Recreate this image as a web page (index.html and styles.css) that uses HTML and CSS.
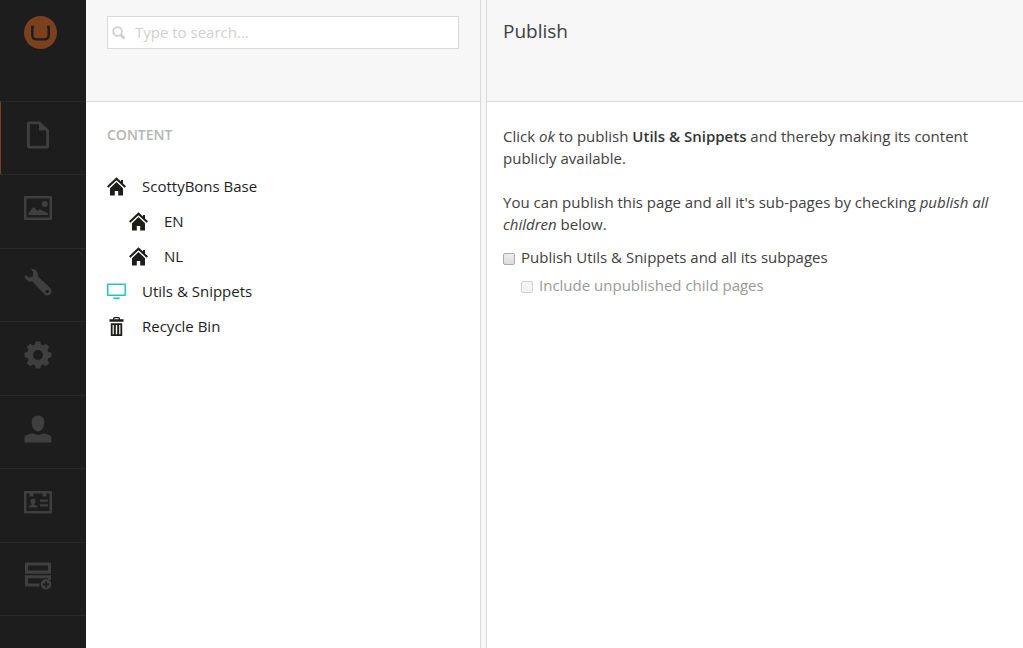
FILE: index.html
```html
<!DOCTYPE html>
<html lang="en">
<head>
<meta charset="utf-8">
<title>Publish</title>
<meta name="viewport" content="width=device-width, initial-scale=1">
<link rel="stylesheet" href="styles.css">
</head>
<body>
<svg class="sprite" aria-hidden="true">
  <symbol id="home" viewBox="0 0 19 19">
    <path d="M9.500 .3 0 9.300l1.400 1.500 8.100-7.600 8.100 7.600L19 9.300l-3-2.900V3h-2v1.500z"/>
    <path d="M9.500 5 3 11.200V18.500h4.800V14h3.400v4.500H16v-7.300z"/>
  </symbol>
</svg>
<div class="app">
  <nav class="sections" aria-label="Sections">
    <a class="logo" href="#" aria-label="Home">
      <svg viewBox="0 0 33 33" width="33" height="33"><circle cx="16.500" cy="16.500" r="16.500" fill="#7b411e"/><path d="M10 11H8.300V19Q8.300 23.400 12.800 23.400H20.200Q24.700 23.400 24.700 19V11H23" fill="none" stroke="#1d1d1d" stroke-width="2.400"/></svg>
    </a>
    <div class="section-list">
      <a class="section active" href="#" aria-label="Content"><svg class="icon" viewBox="0 0 30 30"><path fill-rule="evenodd" d="M6 1.500h11L26 10v16.500a2 2 0 0 1-2 2H6a2 2 0 0 1-2-2v-23a2 2 0 0 1 2-2zM6.800 4.300v21.400h16.400V10.500H16V4.300z"/></svg></a>
      <a class="section" href="#" aria-label="Media"><svg class="icon" viewBox="0 0 30 30"><path fill-rule="evenodd" d="M2 3h26a1 1 0 0 1 1 1v22a1 1 0 0 1-1 1H2a1 1 0 0 1-1-1V4a1 1 0 0 1 1-1zm1.500 2.500v19h23v-19z"/><circle cx="21.800" cy="11" r="3"/><path d="M5.500 22v-2l5-6 4.200 4 2-1.800 8.300 4V22z"/></svg></a>
      <a class="section" href="#" aria-label="Settings"><svg class="icon" viewBox="0 0 30 30"><path fill-rule="evenodd" d="M8 1.700c4.300-.5 7.600 3.300 6.900 7.500L27.400 21.300c3.600 4.200-1.900 9.600-6 6L9.500 14.500C5.500 15.500 1.300 12.300 1.700 8l4.500 2.500 3.800-1V5zM24.200 22.700a1.700 1.700 0 1 0 0 3.400 1.700 1.700 0 0 0 0-3.400z"/></svg></a>
      <a class="section" href="#" aria-label="Developer"><svg class="icon" viewBox="0 0 30 30"><path fill-rule="evenodd" d="M12.700 1.500h4.600l.7 3.100 2.200.9 2.700-1.700 3.300 3.300-1.700 2.700.9 2.200 3.100.7v4.600l-3.100.7-.9 2.200 1.700 2.700-3.300 3.300-2.700-1.700-2.200.9-.7 3.100h-4.600l-.7-3.100-2.200-.9-2.700 1.700-3.300-3.300 1.700-2.700-.9-2.200-3.100-.7v-4.600l3.100-.7.9-2.200-1.700-2.700 3.300-3.300 2.700 1.700 2.200-.9zM15 10a5 5 0 1 0 0 10 5 5 0 0 0 0-10z"/></svg></a>
      <a class="section" href="#" aria-label="Users"><svg class="icon" viewBox="0 0 30 30"><path d="M15 1.500c4.200 0 6.300 3 6.300 7 0 4.500-2.800 9-6.300 9s-6.300-4.500-6.300-9c0-4 2.100-7 6.300-7zM1.500 28.500v-4.700c0-2.500 5-4.300 9-4.300 3 1.700 6 1.700 9 0 4 0 9 1.800 9 4.300v4.700z"/></svg></a>
      <a class="section" href="#" aria-label="Members"><svg class="icon" viewBox="0 0 30 30"><path fill-rule="evenodd" d="M2 4h26a1 1 0 0 1 1 1v20.500a1 1 0 0 1-1 1H2a1 1 0 0 1-1-1V5a1 1 0 0 1 1-1zm1.500 2.500V24h23V6.500h-3v3h-4v-3h-9v3h-4v-3z"/><path d="M10 11.500c3.400 0 2.800 5 1 6.200 1.800.4 3.500.8 3.500 2.800h-9c0-2 1.700-2.400 3.500-2.800-1.800-1.200-2.400-6.200 1-6.200zM17 12.500h8v2.300h-8zM17 17.200h8v2.300h-8z"/></svg></a>
      <a class="section" href="#" aria-label="Forms"><svg class="icon" viewBox="0 0 30 30"><path fill-rule="evenodd" d="M2 1.500h26v11.300H2zM5 4.500v5h20v-5zM2 14.200h26v5h-3v-2H5v5.300h11.500v3H2z"/><path fill-rule="evenodd" d="M23 18a5.300 5.300 0 1 1 0 10.600A5.300 5.300 0 0 1 23 18zm-.8 2.300v2.200H20v1.700h2.200v2.200h1.700v-2.200H26v-1.700h-2.100v-2.200z"/></svg></a>
    </div>
  </nav>
  <aside class="tree-panel">
    <header class="bar tree-bar">
      <form class="search">
        <svg class="search-icon" viewBox="0 0 14 14" width="14" height="14"><circle cx="5.500" cy="5.500" r="4.400" fill="none" stroke="#d0d0d0" stroke-width="1.700"/><path d="m8.500 8.500 4 4" stroke="#d0d0d0" stroke-width="2.800"/></svg>
        <input class="search-box" type="text" placeholder="Type to search..." aria-label="Search">
      </form>
    </header>
    <div class="tree">
      <h2 class="tree-title">CONTENT</h2>
      <ul class="nodes">
        <li><a class="node" href="#"><svg class="node-icon"><use href="#home"/></svg>ScottyBons Base</a>
          <ul class="nodes nested">
            <li><a class="node" href="#"><svg class="node-icon"><use href="#home"/></svg>EN</a></li>
            <li><a class="node" href="#"><svg class="node-icon"><use href="#home"/></svg>NL</a></li>
          </ul>
        </li>
        <li><a class="node" href="#"><svg class="node-icon teal" viewBox="0 0 19 19"><path fill-rule="evenodd" d="M1 1.500h17a1 1 0 0 1 1 1V13a1 1 0 0 1-1 1H1a1 1 0 0 1-1-1V2.500a1 1 0 0 1 1-1zM1.500 3v9.500h16V3zM5.500 15.500h8L12 17.300H7z"/></svg>Utils &amp; Snippets</a></li>
        <li><a class="node" href="#"><svg class="node-icon" viewBox="0 0 19 19"><path fill-rule="evenodd" d="M6 2.300V1.500Q6 0 7.500 0h4Q13 0 13 1.500v.8h3.500v2.500h-14V2.300zm1.300 0h4.400V1.200H7.300zM3.800 6.200h11.400V19H3.800zM5.600 8v9.200h1.200V8zm3.200 0v9.200h1.400V8zm3.400 0v9.200h1.200V8z"/></svg>Recycle Bin</a></li>
      </ul>
    </div>
  </aside>
  <main class="dialog">
    <header class="bar dialog-bar"><h1 class="dialog-title">Publish</h1></header>
    <div class="dialog-body">
      <p class="text">Click <em>ok</em> to publish <strong>Utils &amp; Snippets</strong> and thereby making its content publicly available.</p>
      <p class="text">You can publish this page and all it's sub-pages by checking <em>publish all children</em> below.</p>
      <div class="options">
        <label class="option"><input class="check" type="checkbox">Publish Utils &amp; Snippets and all its subpages</label>
        <label class="option disabled"><input class="check" type="checkbox" disabled>Include unpublished child pages</label>
      </div>
    </div>
  </main>
</div>
</body>
</html>
```
FILE: styles.css
```css
* { box-sizing: border-box; }
body {
  margin: 0;
  font: 15px/22px "Open Sans", sans-serif;
  color: #404040;
  background: #fff;
}
a { color: inherit; text-decoration: none; }
strong { font-weight: 600; color: #343434; }
.sprite { display: none; }
.app {
  display: grid;
  grid-template-columns: 86px 395px minmax(0, 1fr);
  min-height: 100vh;
}

.sections { background: #1d1d1d; }
.logo {
  display: block;
  height: 101px;
  padding: 16px 24px;
}
.section-list {
  display: grid;
  grid-auto-rows: 1fr;
  height: 515px;
  border-bottom: 1px solid #292929;
}
.section {
  display: flex;
  justify-content: center;
  padding: 18px 10px 0 0;
  border-top: 1px solid #292929;
}
.section.active {
  padding-right: 11px;
  border-left: 1px solid #7b411e;
}
.icon { width: 30px; height: 30px; fill: #3f3f3f; }

.bar {
  height: 102px;
  background: #f7f7f7;
  border-bottom: 1px solid #d9d9d9;
}
.tree-panel { border-right: 1px solid #d9d9d9; }
.tree-bar { padding: 16px 21px; }
.search {
  display: flex;
  align-items: center;
  gap: 9px;
  height: 33px;
  padding-left: 4px;
  background: #fff;
  border: 1px solid #d9d9d9;
}
.search-box {
  flex: 1;
  min-width: 0;
  padding: 0 0 1px;
  border: 0;
  outline: 0;
  background: transparent;
  font: inherit;
}
.search-box::placeholder { color: #d0d0d0; opacity: 1; }
.tree { padding: 22px 21px; }
.tree-title {
  margin: 0 0 23px;
  font-size: 14px;
  line-height: 22px;
  font-weight: 600;
  color: #b5b5b5;
}
.nodes { margin: 0; padding: 0; list-style: none; }
.nested { padding-left: 22px; }
.node {
  display: flex;
  align-items: center;
  gap: 16px;
  height: 35px;
  padding-bottom: 2px;
  color: #1d1d1d;
}
.node-icon { width: 19px; height: 19px; margin-top: 2px; fill: #1d1d1b; }
.node-icon.teal { fill: #1fc5c5; }

.dialog {
  display: flex;
  flex-direction: column;
  padding-left: 5px;
  background: #f7f7f7;
}
.dialog-bar, .dialog-body { border-left: 1px solid #d9d9d9; }
.dialog-bar { padding: 18px 16px; }
.dialog-title {
  margin: 0;
  font-size: 19px;
  line-height: 26px;
  font-weight: 400;
}
.dialog-body {
  flex: 1;
  padding: 23px 16px;
  background: #fff;
}
.text { margin: 0 0 22px; }
.options { margin-top: -14px; }
.option {
  display: flex;
  align-items: center;
  gap: 6px;
  height: 28px;
}
.check {
  appearance: none;
  width: 12px;
  height: 12px;
  margin: 4px 0 0;
  border: 1px solid #a9a9a9;
  border-radius: 2px;
  background: linear-gradient(#eee, #dcdcdc);
}
.check:checked { background: #666; }
.disabled { padding-left: 18px; color: #999; }
.disabled .check { border-color: #d0d0d0; background: #f3f3f3; }
```
